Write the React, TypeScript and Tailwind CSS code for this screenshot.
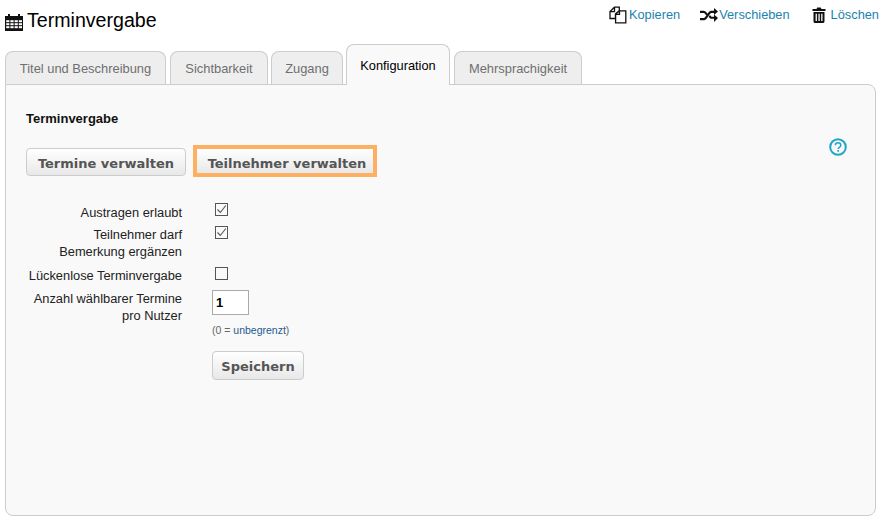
import React from "react";

const CalendarIcon = () => (
  <svg width="18" height="18" viewBox="0 0 18 18" className="block shrink-0">
    <path fill="#111" d="M0 3h3V1h2v2h8V1h2v2h3v15H0z" />
    <g fill="#fff">
      {[7, 10, 13].flatMap((y) =>
        [1.2, 5.4, 9.6, 13.8].map((x) => <rect key={`${x}-${y}`} x={x} y={y + 0.2} width="3.2" height="2" />)
      )}
    </g>
  </svg>
);

const CopyIcon = () => (
  <svg width="18" height="18" viewBox="0 0 18 18" className="block shrink-0" fill="#fff" stroke="#111" strokeWidth="1.3">
    <path d="M5.5 1.2h4.8v3.6L6.5 8v4.5H1V5.5z" />
    <path d="M1 5.6h4.5V1.2" fill="none" />
    <path d="M10.5 4.8h6.3v12H6.6V8.2z" />
    <path d="M6.6 8.4h3.9V4.8" fill="none" />
  </svg>
);

const ShuffleIcon = () => (
  <svg width="18" height="15" viewBox="0 0 18 15" className="block shrink-0" fill="#111">
    <path d="M0 2.700h3.400c1.500 0 2.400.8 3.200 1.900L8 6.500 6.700 8.200 5.200 5.900C4.600 5.100 4.100 4.900 3.200 4.900H0zM0 10.100h3.200c.9 0 1.400-.2 2-1l3.200-4.600c.9-1.200 1.900-1.800 3.400-1.800h2.200V0L18 3.500l-4 3.600V4.900h-2c-.9 0-1.400.2-2 1L6.800 10.500c-.9 1.200-1.900 1.800-3.400 1.800H0zM8.700 8.700l1.300-1.700 1 1.200c.3.400.6.500 1.100.5h1.900V6.400l4 3.600-4 3.900V10.800h-2.200c-1.400 0-2.300-.6-3.100-2.100z" />
  </svg>
);

const TrashIcon = () => (
  <svg width="14" height="16" viewBox="0 0 14 16" className="block shrink-0" fill="#111">
    <path d="M4.500 2 5.300.4h3.400L9.500 2H13.500v2H.5V2z" />
    <path fillRule="evenodd" d="M1.500 5h11v9.200c0 1-.7 1.800-1.700 1.800H3.200c-1 0-1.700-.8-1.700-1.800zM3.600 6.800v7.200h1.300V6.800zm2.800 0v7.200h1.300V6.800zm2.800 0v7.200h1.300V6.800z" />
  </svg>
);

const HelpIcon = () => (
  <svg width="18" height="18" viewBox="0 0 18 18" className="block">
    <circle cx="9" cy="9" r="7.800" fill="none" stroke="#1fa6c4" strokeWidth="2" />
    <path d="M6.300 7.200C6.400 5.700 7.500 4.800 9 4.800c1.600 0 2.800 1 2.800 2.400 0 1.100-.6 1.700-1.400 2.200-.8.500-1.200.9-1.200 1.700" fill="none" stroke="#1fa6c4" strokeWidth="1.500" />
    <rect x="8.300" y="12" width="1.700" height="1.700" fill="#1fa6c4" />
  </svg>
);

const Checkbox = ({ checked }: { checked?: boolean }) => (
  <span className="flex h-[13px] w-[13px] items-center justify-center border border-[#555] bg-[#f9f9f9]">
    {checked && (
      <svg width="11" height="11" viewBox="0 0 11 11">
        <path d="M1.500 5.500 4.300 8.500 9.800 1.500" fill="none" stroke="#555" strokeWidth="1.100" />
      </svg>
    )}
  </span>
);

const Tab = ({ label, className }: { label: string; className: string }) => (
  <div
    className={`flex h-[33px] items-center justify-center rounded-t-[8px] border border-b-0 border-[#cccccc] bg-[#eeeeee] pt-px text-[12.9px] text-[#6f6f6f] ${className}`}
  >
    {label}
  </div>
);

const Label = ({ children, className = "" }: { children: React.ReactNode; className?: string }) => (
  <div className={`w-[156px] shrink-0 text-right text-[12.85px] leading-[17px] text-[#222] ${className}`}>{children}</div>
);

const buttonClass =
  "flex items-center justify-center rounded-[4px] bg-gradient-to-b from-white to-[#e8e8e8] text-[13px] font-bold leading-[16px] text-[#555] [font-family:'DejaVu_Sans',sans-serif]";

export default function App() {
  return (
    <div className="h-[522px] w-[885px] overflow-hidden bg-white pl-[5px] pr-[9px] text-[12.8px] [font-family:'Liberation_Sans',Arial,sans-serif]">
      <header className="flex h-[43px] items-start justify-between">
        <div className="mt-[8px] flex items-center gap-[4px]">
          <div className="mt-[3px]">
            <CalendarIcon />
          </div>
          <h1 className="text-[19.6px] leading-[24px] text-black">Terminvergabe</h1>
        </div>
        <div className="mr-[-3px] mt-[6px] flex items-center leading-[18px] text-[#1b83ad]">
          <a className="flex items-center gap-[2px]">
            <CopyIcon />
            Kopieren
          </a>
          <a className="ml-[20px] flex items-center gap-px">
            <ShuffleIcon />
            Verschieben
          </a>
          <a className="ml-[22px] flex items-center gap-[5px]">
            <TrashIcon />
            Löschen
          </a>
        </div>
      </header>

      <nav className="relative z-10 flex h-[41px] items-end">
        <Tab label="Titel und Beschreibung" className="w-[161px]" />
        <Tab label="Sichtbarkeit" className="ml-[4px] w-[98px]" />
        <Tab label="Zugang" className="ml-[3px] w-[72px]" />
        <div className="mb-[-1px] ml-[3px] flex h-[41px] w-[104px] items-center justify-center rounded-t-[8px] border border-b-0 border-[#cccccc] bg-[#f9f9f9] pt-px text-black">
          Konfiguration
        </div>
        <Tab label="Mehrsprachigkeit" className="ml-[4px] w-[128px]" />
      </nav>

      <main className="h-[432px] w-[871px] rounded-b-[8px] rounded-tr-[8px] border border-[#cccccc] bg-[#f9f9f9] pl-[20px] pr-[28px]">
        <h2 className="mt-[27px] text-[13px] font-bold leading-[14px] text-[#111]">Terminvergabe</h2>

        <div className="mt-[19px] flex items-start justify-between">
          <div className="flex items-start gap-[7px]">
            <button className={`${buttonClass} mt-[3px] h-[28px] w-[160px] border border-[#cccccc] pt-[3px]`}>Termine verwalten</button>
            <button className={`${buttonClass} h-[32px] w-[184px] !rounded-none border-[4px] border-[#fdb062] pl-[4px] pt-[6px]`}>
              Teilnehmer verwalten
            </button>
          </div>
          <div className="mt-[-7px]">
            <HelpIcon />
          </div>
        </div>

        <div className="mt-[25px] flex flex-col">
          <div className="flex h-[23px] items-start">
            <Label className="pt-[2px]">Austragen erlaubt</Label>
            <div className="ml-[33px] mt-[1px]">
              <Checkbox checked />
            </div>
          </div>
          <div className="flex h-[41px] items-start">
            <Label className="pt-px">
              Teilnehmer darf
              <br />
              Bemerkung ergänzen
            </Label>
            <div className="ml-[33px] mt-px">
              <Checkbox checked />
            </div>
          </div>
          <div className="flex h-[22px] items-start">
            <Label className="pt-px">Lückenlose Terminvergabe</Label>
            <div className="ml-[33px] mt-[1px]">
              <Checkbox />
            </div>
          </div>
          <div className="flex items-start">
            <Label className="pt-[2px]">
              Anzahl wählbarer Termine
              <br />
              pro Nutzer
            </Label>
            <div className="ml-[30px] mt-[2px] flex flex-col">
              <div className="flex h-[25px] w-[37px] items-center border border-[#aaaaaa] bg-white pl-[3px] text-[13px] font-bold text-black">
                1
              </div>
              <div className="mt-[9px] text-[10.5px] leading-[12px] text-[#666]">
                (0 = <span className="text-[#1c5a92]">unbegrenzt</span>)
              </div>
              <button className={`${buttonClass} mt-[15px] h-[29px] w-[92px] border border-[#cccccc] pt-[2px]`}>Speichern</button>
            </div>
          </div>
        </div>
      </main>
    </div>
  );
}
